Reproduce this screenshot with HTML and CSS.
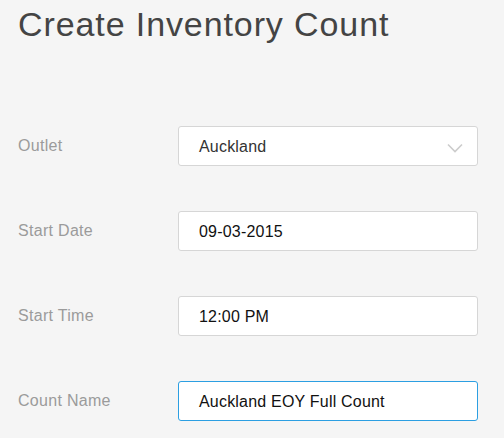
FILE: index.html
```html
<!DOCTYPE html>
<html>
<head>
<meta charset="utf-8">
<link rel="stylesheet" href="styles.css">
</head>
<body>
<div class="page">
  <h1 class="title">Create Inventory Count</h1>
  <form class="form">
    <div class="row">
      <label class="label">Outlet</label>
      <div class="field select">
        <span class="value muted">Auckland</span>
        <svg class="chev" width="16" height="10" viewBox="0 0 16 10"><path d="M1 1.5 L8 8.5 L15 1.5" fill="none" stroke="#cccccc" stroke-width="1.6"/></svg>
      </div>
    </div>
    <div class="row">
      <label class="label">Start Date</label>
      <div class="field"><span class="value">09-03-2015</span></div>
    </div>
    <div class="row">
      <label class="label">Start Time</label>
      <div class="field"><span class="value">12:00 PM</span></div>
    </div>
    <div class="row">
      <label class="label">Count Name</label>
      <div class="field focus"><span class="value">Auckland EOY Full Count</span></div>
    </div>
  </form>
</div>
</body>
</html>
```
FILE: styles.css
```css
html, body {
  margin: 0;
  padding: 0;
  background: #f5f5f5;
}
body {
  font-family: "Liberation Sans", Arial, sans-serif;
}
.page {
  padding: 5px 26px 0 18px;
}
.title {
  margin: 0;
  font-size: 34px;
  font-weight: normal;
  line-height: 39px;
  color: #444444;
  letter-spacing: 0.9px;
}
.form {
  display: flex;
  flex-direction: column;
  gap: 45px;
  margin-top: 82px;
}
.row {
  display: flex;
  align-items: center;
}
.label {
  width: 160px;
  font-size: 16px;
  color: #9b9b9b;
  letter-spacing: 0.3px;
}
.field {
  flex: 1;
  height: 40px;
  box-sizing: border-box;
  border: 1px solid #d6d6d6;
  border-radius: 3px;
  background: #ffffff;
  display: flex;
  align-items: center;
  padding: 0 14px 0 20px;
}
.value {
  flex: 1;
  font-size: 16px;
  color: #111111;
  letter-spacing: 0.2px;
  padding-top: 1px;
}
.value.muted {
  color: #333333;
}
.focus {
  border-color: #2c9fe2;
}
.chev {
  display: block;
  margin-top: 3px;
}
```
